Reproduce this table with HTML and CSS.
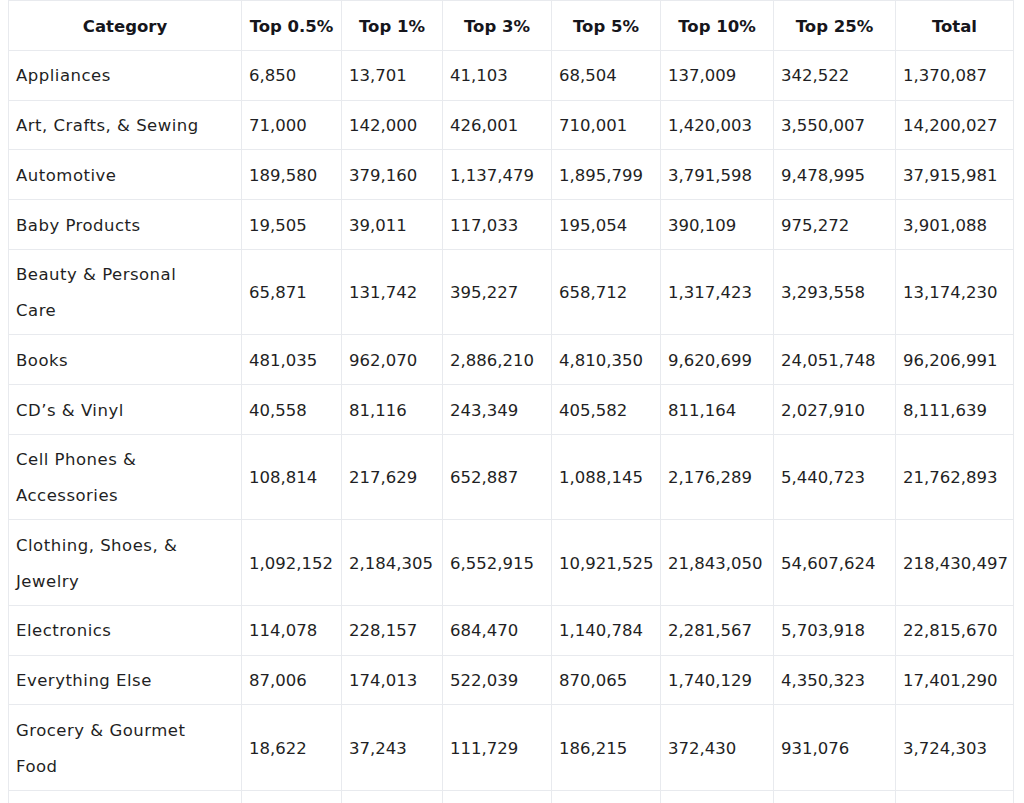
FILE: index.html
```html
<!DOCTYPE html>
<html>
<head>
<meta charset="utf-8">
<link rel="stylesheet" href="styles.css">
</head>
<body>
<table class="data">
  <colgroup>
    <col class="c-cat"><col class="c1"><col class="c2"><col class="c3"><col class="c4"><col class="c5"><col class="c6"><col class="c7">
  </colgroup>
  <thead>
    <tr><th>Category</th><th>Top 0.5%</th><th>Top 1%</th><th>Top 3%</th><th>Top 5%</th><th>Top 10%</th><th>Top 25%</th><th>Total</th></tr>
  </thead>
  <tbody>
    <tr><td>Appliances</td><td>6,850</td><td>13,701</td><td>41,103</td><td>68,504</td><td>137,009</td><td>342,522</td><td>1,370,087</td></tr>
    <tr><td>Art, Crafts, &amp; Sewing</td><td>71,000</td><td>142,000</td><td>426,001</td><td>710,001</td><td>1,420,003</td><td>3,550,007</td><td>14,200,027</td></tr>
    <tr><td>Automotive</td><td>189,580</td><td>379,160</td><td>1,137,479</td><td>1,895,799</td><td>3,791,598</td><td>9,478,995</td><td>37,915,981</td></tr>
    <tr><td>Baby Products</td><td>19,505</td><td>39,011</td><td>117,033</td><td>195,054</td><td>390,109</td><td>975,272</td><td>3,901,088</td></tr>
    <tr><td>Beauty &amp; Personal Care</td><td>65,871</td><td>131,742</td><td>395,227</td><td>658,712</td><td>1,317,423</td><td>3,293,558</td><td>13,174,230</td></tr>
    <tr><td>Books</td><td>481,035</td><td>962,070</td><td>2,886,210</td><td>4,810,350</td><td>9,620,699</td><td>24,051,748</td><td>96,206,991</td></tr>
    <tr><td>CD’s &amp; Vinyl</td><td>40,558</td><td>81,116</td><td>243,349</td><td>405,582</td><td>811,164</td><td>2,027,910</td><td>8,111,639</td></tr>
    <tr><td>Cell Phones &amp; Accessories</td><td>108,814</td><td>217,629</td><td>652,887</td><td>1,088,145</td><td>2,176,289</td><td>5,440,723</td><td>21,762,893</td></tr>
    <tr><td>Clothing, Shoes, &amp; Jewelry</td><td>1,092,152</td><td>2,184,305</td><td>6,552,915</td><td>10,921,525</td><td>21,843,050</td><td>54,607,624</td><td>218,430,497</td></tr>
    <tr><td>Electronics</td><td>114,078</td><td>228,157</td><td>684,470</td><td>1,140,784</td><td>2,281,567</td><td>5,703,918</td><td>22,815,670</td></tr>
    <tr><td>Everything Else</td><td>87,006</td><td>174,013</td><td>522,039</td><td>870,065</td><td>1,740,129</td><td>4,350,323</td><td>17,401,290</td></tr>
    <tr><td>Grocery &amp; Gourmet Food</td><td>18,622</td><td>37,243</td><td>111,729</td><td>186,215</td><td>372,430</td><td>931,076</td><td>3,724,303</td></tr>
    <tr class="tail"><td></td><td></td><td></td><td></td><td></td><td></td><td></td><td></td></tr>
  </tbody>
</table>
</body>
</html>
```
FILE: styles.css
```css
html, body {
  margin: 0;
  padding: 0;
  background: #ffffff;
}
body {
  padding: 0 8px;
  font-family: "DejaVu Sans", "Open Sans", sans-serif;
  color: #1f1f24;
}
.data {
  border-collapse: collapse;
  table-layout: fixed;
  width: 1006px;
  font-size: 16.5px;
  line-height: 35.75px;
}
.data th, .data td {
  border: 1px solid #e8eaee;
  padding: 7.5px 7px 5.5px;
  vertical-align: middle;
}
.data th {
  font-weight: 700;
  text-align: center;
  color: #16161c;
}
.data td {
  text-align: left;
  font-weight: 400;
}
.data td:first-child {
  letter-spacing: 0.5px;
  padding-right: 24px;
}
.data .tail td {
  height: 36px;
}
.c-cat { width: 233px; }
.c1 { width: 100px; }
.c2 { width: 101px; }
.c3 { width: 109px; }
.c4 { width: 109px; }
.c5 { width: 113px; }
.c6 { width: 122px; }
.c7 { width: 118px; }
```
